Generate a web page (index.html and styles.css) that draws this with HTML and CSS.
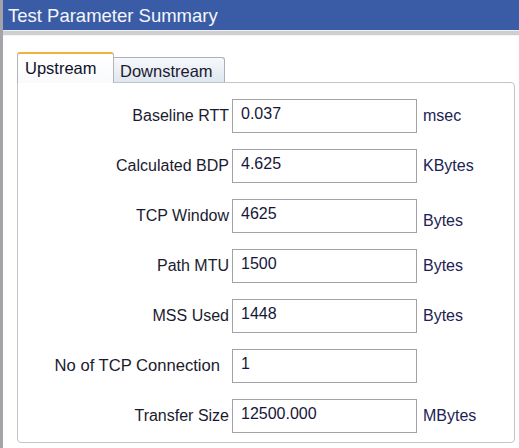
FILE: index.html
```html
<!DOCTYPE html>
<html lang="en">
<head>
    <meta charset="UTF-8">
    <title>Test Parameter Summary</title>
    <link rel="stylesheet" href="styles.css">
</head>
<body>
    <div class="window">
        <div class="titlebar">Test Parameter Summary</div>
        <div class="separator"></div>

        <div class="content">
            <!-- Tab strip -->
            <div class="tabs">
                <div class="tab active">Upstream</div>
                <div class="tab">Downstream</div>
            </div>

            <!-- Upstream parameters -->
            <div class="panel">
                <div class="row">
                    <span class="label">Baseline RTT</span>
                    <input class="field" type="text" value="0.037" readonly>
                    <span class="unit">msec</span>
                </div>
                <div class="row">
                    <span class="label">Calculated BDP</span>
                    <input class="field" type="text" value="4.625" readonly>
                    <span class="unit">KBytes</span>
                </div>
                <div class="row">
                    <span class="label">TCP Window</span>
                    <input class="field" type="text" value="4625" readonly>
                    <span class="unit low">Bytes</span>
                </div>
                <div class="row">
                    <span class="label">Path MTU</span>
                    <input class="field" type="text" value="1500" readonly>
                    <span class="unit">Bytes</span>
                </div>
                <div class="row">
                    <span class="label">MSS Used</span>
                    <input class="field" type="text" value="1448" readonly>
                    <span class="unit">Bytes</span>
                </div>
                <div class="row">
                    <span class="label wide">No of TCP Connection</span>
                    <input class="field" type="text" value="1" readonly>
                    <span class="unit"></span>
                </div>
                <div class="row">
                    <span class="label">Transfer Size</span>
                    <input class="field" type="text" value="12500.000" readonly>
                    <span class="unit">MBytes</span>
                </div>
            </div>
        </div>
    </div>
</body>
</html>
```

FILE: styles.css
```css
body {
    margin: 0;
    font-family: "Liberation Sans", Arial, sans-serif;
    background-color: #ffffff;
    color: #1b1b30;
}

.window {
    height: 448px;
    box-sizing: border-box;
    border-left: 3px solid #a4a4a8;
}

.titlebar {
    height: 30px;
    line-height: 31px;
    padding-left: 5px;
    background-color: #3a5ca6;
    color: #f4f6fb;
    font-size: 18.5px;
}

.separator {
    height: 6px;
    background: linear-gradient(#eef0f4 0 1px, #cfcfd2 1px 5px, #f4f4f4 5px);
}

.content {
    padding: 16px 4px 0 14px;
}

.tabs {
    display: flex;
    align-items: flex-end;
    height: 30px;
}

.tab {
    box-sizing: border-box;
    width: 111px;
    height: 25px;
    padding: 4px 0 0 6px;
    font-size: 16.5px;
    color: #1a1a2e;
    border: 1px solid #aab0bc;
    border-bottom: none;
    border-left: none;
    border-radius: 0 3px 0 0;
    background: linear-gradient(#f7f8fb, #dfe6f0);
}

.tab.active {
    position: relative;
    z-index: 1;
    width: 97px;
    height: 31px;
    margin-bottom: -1px;
    padding: 5px 0 0 7px;
    color: #10102a;
    border: 1px solid #b4b4b4;
    border-top: 2px solid #f0b23a;
    border-bottom: none;
    border-radius: 3px 3px 0 0;
    background: linear-gradient(#ffffff, #f9fafc);
}

.panel {
    box-sizing: border-box;
    height: 361px;
    padding-top: 16px;
    border: 1px solid #c4c4c8;
    border-radius: 0 4px 4px 4px;
    background-color: #ffffff;
}

.row {
    display: grid;
    grid-template-columns: 211px 185px auto;
    column-gap: 3px;
    align-items: center;
    height: 34px;
    margin-bottom: 16px;
}

.label {
    text-align: right;
    font-size: 16px;
}

.label.wide {
    padding-right: 9px;
    font-size: 16.6px;
}

.field {
    box-sizing: border-box;
    width: 185px;
    height: 34px;
    margin: 0;
    padding: 0 0 5px 8px;
    border: 1px solid #a2a2a6;
    border-radius: 0;
    background-color: #ffffff;
    font-family: inherit;
    font-size: 16px;
    color: #16163a;
    outline: none;
}

.unit {
    padding-left: 3px;
    font-size: 16px;
    color: #1c2254;
}

.unit.low {
    padding-top: 10px;
}
```
